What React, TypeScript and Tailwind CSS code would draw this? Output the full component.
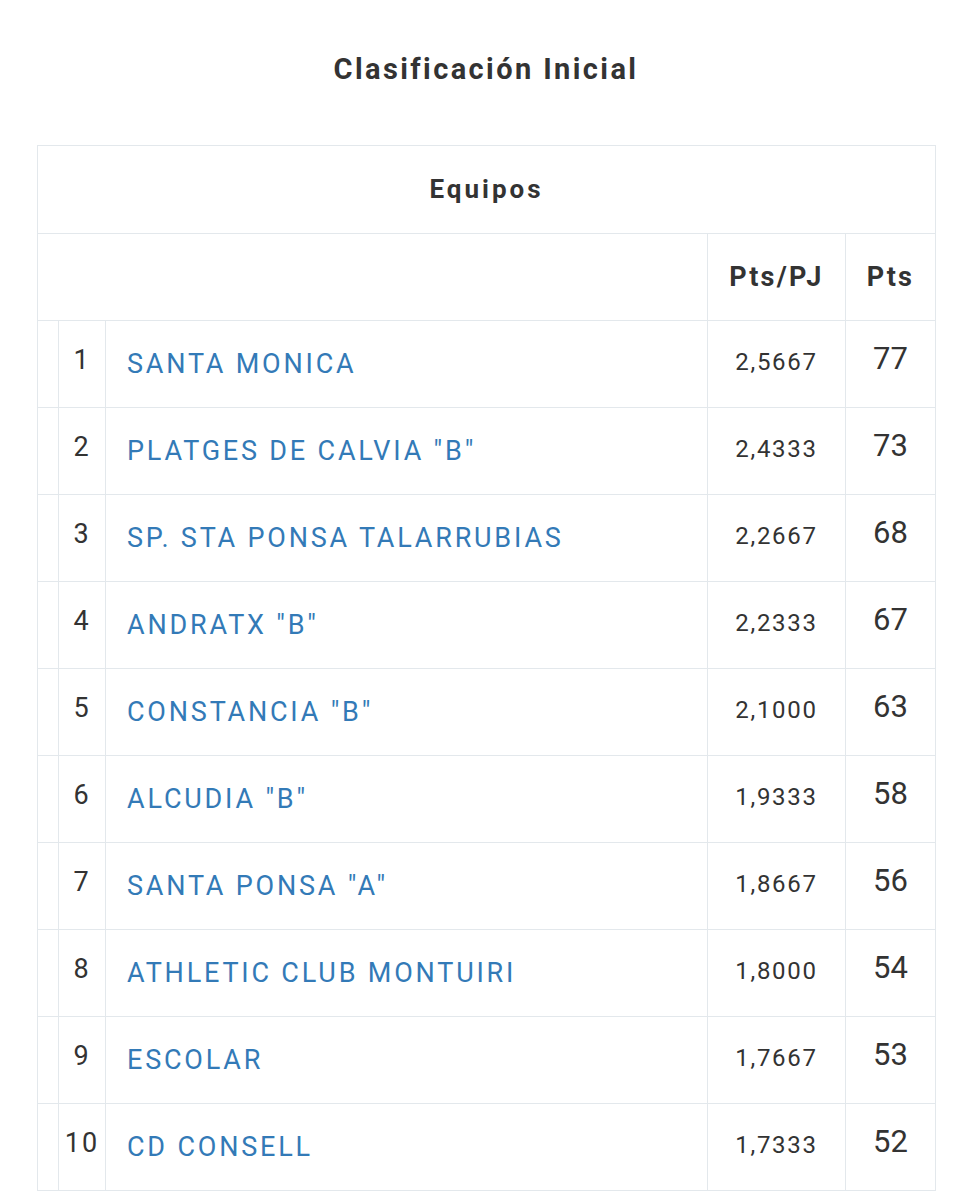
const teams = [
  { pos: 1, name: "SANTA MONICA", avg: "2,5667", pts: 77 },
  { pos: 2, name: 'PLATGES DE CALVIA "B"', avg: "2,4333", pts: 73 },
  { pos: 3, name: "SP. STA PONSA TALARRUBIAS", avg: "2,2667", pts: 68 },
  { pos: 4, name: 'ANDRATX "B"', avg: "2,2333", pts: 67 },
  { pos: 5, name: 'CONSTANCIA "B"', avg: "2,1000", pts: 63 },
  { pos: 6, name: 'ALCUDIA "B"', avg: "1,9333", pts: 58 },
  { pos: 7, name: 'SANTA PONSA "A"', avg: "1,8667", pts: 56 },
  { pos: 8, name: "ATHLETIC CLUB MONTUIRI", avg: "1,8000", pts: 54 },
  { pos: 9, name: "ESCOLAR", avg: "1,7667", pts: 53 },
  { pos: 10, name: "CD CONSELL", avg: "1,7333", pts: 52 },
];

export default function App() {
  return (
    <div className="min-h-[1200px] bg-white font-['Roboto',sans-serif] text-[#333]">
      <div className="ml-[37px] w-[898px] pt-[49px]">
        {/* Title */}
        <h1 className="text-center text-[29px] font-bold leading-[40px] tracking-[2.4px] text-[#333]">
          Clasificación Inicial
        </h1>

        <table className="mt-[56px] w-[898px] table-fixed border-collapse">
          <colgroup>
            <col className="w-[21px]" />
            <col className="w-[47px]" />
            <col className="w-[602px]" />
            <col className="w-[138px]" />
            <col className="w-[90px]" />
          </colgroup>
          <thead>
            <tr className="h-[88px]">
              <th
                colSpan={5}
                className="border border-[#e3e8ec] text-center text-[26px] font-bold tracking-[3px]"
              >
                Equipos
              </th>
            </tr>
            <tr className="h-[87px]">
              <th colSpan={3} className="border border-[#e3e8ec]" />
              <th className="border border-[#e3e8ec] text-center text-[27px] font-bold tracking-[2.3px]">
                Pts/PJ
              </th>
              <th className="border border-[#e3e8ec] text-center text-[27px] font-bold tracking-[2.3px]">
                Pts
              </th>
            </tr>
          </thead>
          <tbody>
            {teams.map((t) => (
              <tr key={t.pos} className="h-[87px]">
                <td className="border border-[#e3e8ec]" />
                <td className="border border-[#e3e8ec] pb-[8px] text-center text-[27px] tracking-[2px] text-[#333]">
                  {t.pos}
                </td>
                <td className="border border-[#e3e8ec] pl-[21px] text-[27px] tracking-[2.8px] text-[#337ab7]">
                  {t.name}
                </td>
                <td className="border border-[#e3e8ec] pb-[4px] text-center text-[24px] tracking-[1.7px] text-[#333]">
                  {t.avg}
                </td>
                <td className="border border-[#e3e8ec] pb-[10px] text-center text-[31px] text-[#333]">
                  {t.pts}
                </td>
              </tr>
            ))}
          </tbody>
        </table>
      </div>
    </div>
  );
}
